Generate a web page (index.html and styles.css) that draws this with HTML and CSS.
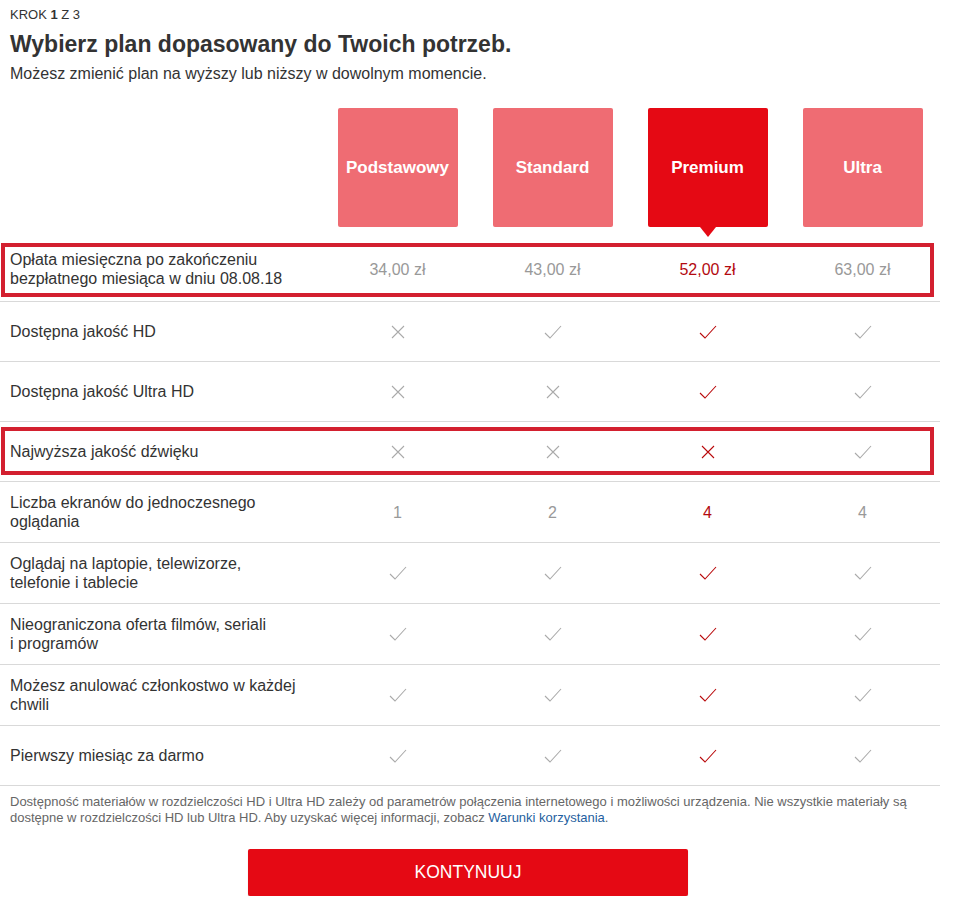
FILE: index.html
```html
<!DOCTYPE html>
<html lang="pl">
<head>
<meta charset="utf-8">
<title>Wybierz plan</title>
<link rel="stylesheet" href="styles.css">
</head>
<body>
<div class="page">
  <header class="head">
    <div class="step">KROK <b>1</b> Z 3</div>
    <h1 class="title">Wybierz plan dopasowany do Twoich potrzeb.</h1>
    <p class="sub">Możesz zmienić plan na wyższy lub niższy w dowolnym momencie.</p>
  </header>

  <div class="plans">
    <div></div>
    <div class="plan">Podstawowy</div>
    <div class="plan">Standard</div>
    <div class="plan selected">Premium</div>
    <div class="plan">Ultra</div>
  </div>

  <div class="table">
    <div class="row r-price hl hl-price">
      <div class="label">Opłata miesięczna po zakończeniu<br>bezpłatnego miesiąca w dniu 08.08.18</div>
      <div class="cell">34,00 zł</div>
      <div class="cell">43,00 zł</div>
      <div class="cell sel">52,00 zł</div>
      <div class="cell">63,00 zł</div>
    </div>
    <div class="row r59">
      <div class="label">Dostępna jakość HD</div>
      <div class="cell"><svg class="ico" viewBox="0 0 18 14"><path d="M3 1 L15 13 M15 1 L3 13"/></svg></div>
      <div class="cell"><svg class="ico" viewBox="0 0 18 14"><path d="M1 8 L6 13 L17 1"/></svg></div>
      <div class="cell sel"><svg class="ico" viewBox="0 0 18 14"><path d="M1 8 L6 13 L17 1"/></svg></div>
      <div class="cell"><svg class="ico" viewBox="0 0 18 14"><path d="M1 8 L6 13 L17 1"/></svg></div>
    </div>
    <div class="row r59">
      <div class="label">Dostępna jakość Ultra HD</div>
      <div class="cell"><svg class="ico" viewBox="0 0 18 14"><path d="M3 1 L15 13 M15 1 L3 13"/></svg></div>
      <div class="cell"><svg class="ico" viewBox="0 0 18 14"><path d="M3 1 L15 13 M15 1 L3 13"/></svg></div>
      <div class="cell sel"><svg class="ico" viewBox="0 0 18 14"><path d="M1 8 L6 13 L17 1"/></svg></div>
      <div class="cell"><svg class="ico" viewBox="0 0 18 14"><path d="M1 8 L6 13 L17 1"/></svg></div>
    </div>
    <div class="row r59 hl hl-sound">
      <div class="label">Najwyższa jakość dźwięku</div>
      <div class="cell"><svg class="ico" viewBox="0 0 18 14"><path d="M3 1 L15 13 M15 1 L3 13"/></svg></div>
      <div class="cell"><svg class="ico" viewBox="0 0 18 14"><path d="M3 1 L15 13 M15 1 L3 13"/></svg></div>
      <div class="cell sel"><svg class="ico" viewBox="0 0 18 14"><path d="M3 1 L15 13 M15 1 L3 13"/></svg></div>
      <div class="cell"><svg class="ico" viewBox="0 0 18 14"><path d="M1 8 L6 13 L17 1"/></svg></div>
    </div>
    <div class="row r60">
      <div class="label">Liczba ekranów do jednoczesnego<br>oglądania</div>
      <div class="cell">1</div>
      <div class="cell">2</div>
      <div class="cell sel">4</div>
      <div class="cell">4</div>
    </div>
    <div class="row r60">
      <div class="label">Oglądaj na laptopie, telewizorze,<br>telefonie i tablecie</div>
      <div class="cell"><svg class="ico" viewBox="0 0 18 14"><path d="M1 8 L6 13 L17 1"/></svg></div>
      <div class="cell"><svg class="ico" viewBox="0 0 18 14"><path d="M1 8 L6 13 L17 1"/></svg></div>
      <div class="cell sel"><svg class="ico" viewBox="0 0 18 14"><path d="M1 8 L6 13 L17 1"/></svg></div>
      <div class="cell"><svg class="ico" viewBox="0 0 18 14"><path d="M1 8 L6 13 L17 1"/></svg></div>
    </div>
    <div class="row r60">
      <div class="label">Nieograniczona oferta filmów, seriali<br>i programów</div>
      <div class="cell"><svg class="ico" viewBox="0 0 18 14"><path d="M1 8 L6 13 L17 1"/></svg></div>
      <div class="cell"><svg class="ico" viewBox="0 0 18 14"><path d="M1 8 L6 13 L17 1"/></svg></div>
      <div class="cell sel"><svg class="ico" viewBox="0 0 18 14"><path d="M1 8 L6 13 L17 1"/></svg></div>
      <div class="cell"><svg class="ico" viewBox="0 0 18 14"><path d="M1 8 L6 13 L17 1"/></svg></div>
    </div>
    <div class="row r60">
      <div class="label">Możesz anulować członkostwo w każdej<br>chwili</div>
      <div class="cell"><svg class="ico" viewBox="0 0 18 14"><path d="M1 8 L6 13 L17 1"/></svg></div>
      <div class="cell"><svg class="ico" viewBox="0 0 18 14"><path d="M1 8 L6 13 L17 1"/></svg></div>
      <div class="cell sel"><svg class="ico" viewBox="0 0 18 14"><path d="M1 8 L6 13 L17 1"/></svg></div>
      <div class="cell"><svg class="ico" viewBox="0 0 18 14"><path d="M1 8 L6 13 L17 1"/></svg></div>
    </div>
    <div class="row r59">
      <div class="label">Pierwszy miesiąc za darmo</div>
      <div class="cell"><svg class="ico" viewBox="0 0 18 14"><path d="M1 8 L6 13 L17 1"/></svg></div>
      <div class="cell"><svg class="ico" viewBox="0 0 18 14"><path d="M1 8 L6 13 L17 1"/></svg></div>
      <div class="cell sel"><svg class="ico" viewBox="0 0 18 14"><path d="M1 8 L6 13 L17 1"/></svg></div>
      <div class="cell"><svg class="ico" viewBox="0 0 18 14"><path d="M1 8 L6 13 L17 1"/></svg></div>
    </div>
  </div>

  <p class="note">Dostępność materiałów w rozdzielczości HD i Ultra HD zależy od parametrów połączenia internetowego i możliwości urządzenia. Nie wszystkie materiały są dostępne w rozdzielczości HD lub Ultra HD. Aby uzyskać więcej informacji, zobacz <a href="#" class="link">Warunki korzystania</a>.</p>

  <div class="actions">
    <button class="btn" type="button">KONTYNUUJ</button>
  </div>
</div>
</body>
</html>
```

FILE: styles.css
```css
* { box-sizing: border-box; }

body {
  margin: 0;
  background: #fff;
  font-family: "Liberation Sans", Arial, sans-serif;
  color: #333;
}

.page {
  width: 940px;
}

.head {
  padding-left: 10px;
}

.step {
  margin-top: 7px;
  font-size: 13px;
  line-height: 15px;
  color: #333;
}

.title {
  margin: 8px 0 0;
  font-size: 23px;
  line-height: 28px;
  font-weight: bold;
  color: #333;
}

.sub {
  margin: 6px 0 0;
  font-size: 16px;
  line-height: 20px;
  color: #333;
}

.plans {
  display: grid;
  grid-template-columns: 320px repeat(4, 155px);
  margin-top: 24px;
}

.plan {
  position: relative;
  justify-self: center;
  width: 120px;
  height: 119px;
  border-radius: 2px;
  background: #ef6c73;
  color: #fff;
  font-size: 17px;
  font-weight: bold;
  display: flex;
  align-items: center;
  justify-content: center;
}

.plan.selected {
  background: #e50914;
}

.plan.selected::after {
  content: "";
  position: absolute;
  left: 50%;
  bottom: -10px;
  margin-left: -8px;
  border-left: 8px solid transparent;
  border-right: 8px solid transparent;
  border-top: 10px solid #e50914;
}

.table {
  margin-top: 10px;
}

.row {
  position: relative;
  display: grid;
  grid-template-columns: 320px repeat(4, 155px);
  align-items: center;
  border-bottom: 1px solid #d9d9d9;
  font-size: 16px;
  line-height: 19px;
}

.r-price { height: 65px; }
.r59 { height: 60px; }
.r60 { height: 61px; }

.label {
  padding-left: 10px;
  color: #333;
}

.cell {
  text-align: center;
  color: #999;
  display: flex;
  justify-content: center;
  align-items: center;
}

.cell.sel {
  color: #b30a10;
}

.ico {
  width: 18px;
  height: 14px;
  fill: none;
  stroke: currentColor;
  stroke-width: 1.1;
}

.cell .ico {
  color: #aaa;
}

.cell.sel .ico {
  color: #b9090b;
}

.hl::after {
  content: "";
  position: absolute;
  left: 1px;
  right: 6px;
  border: 4px solid #d3202f;
  pointer-events: none;
}

.hl-price::after {
  top: 6px;
  bottom: 4px;
}

.hl-sound::after {
  top: 5px;
  bottom: 6px;
}

.note {
  width: 930px;
  margin: 8px 0 0;
  padding-left: 10px;
  font-size: 13px;
  line-height: 16px;
  color: #666;
}

.link {
  color: #1f5fa0;
  text-decoration: none;
}

.actions {
  display: flex;
  justify-content: center;
  margin-top: 23px;
  padding-right: 4px;
}

.btn {
  width: 440px;
  height: 47px;
  border: 0;
  border-radius: 2px;
  background: #e50914;
  color: #fff;
  font-family: "Liberation Sans", Arial, sans-serif;
  font-size: 17.5px;
  box-shadow: 0 1px 1px rgba(0, 0, 0, 0.25);
}
```
